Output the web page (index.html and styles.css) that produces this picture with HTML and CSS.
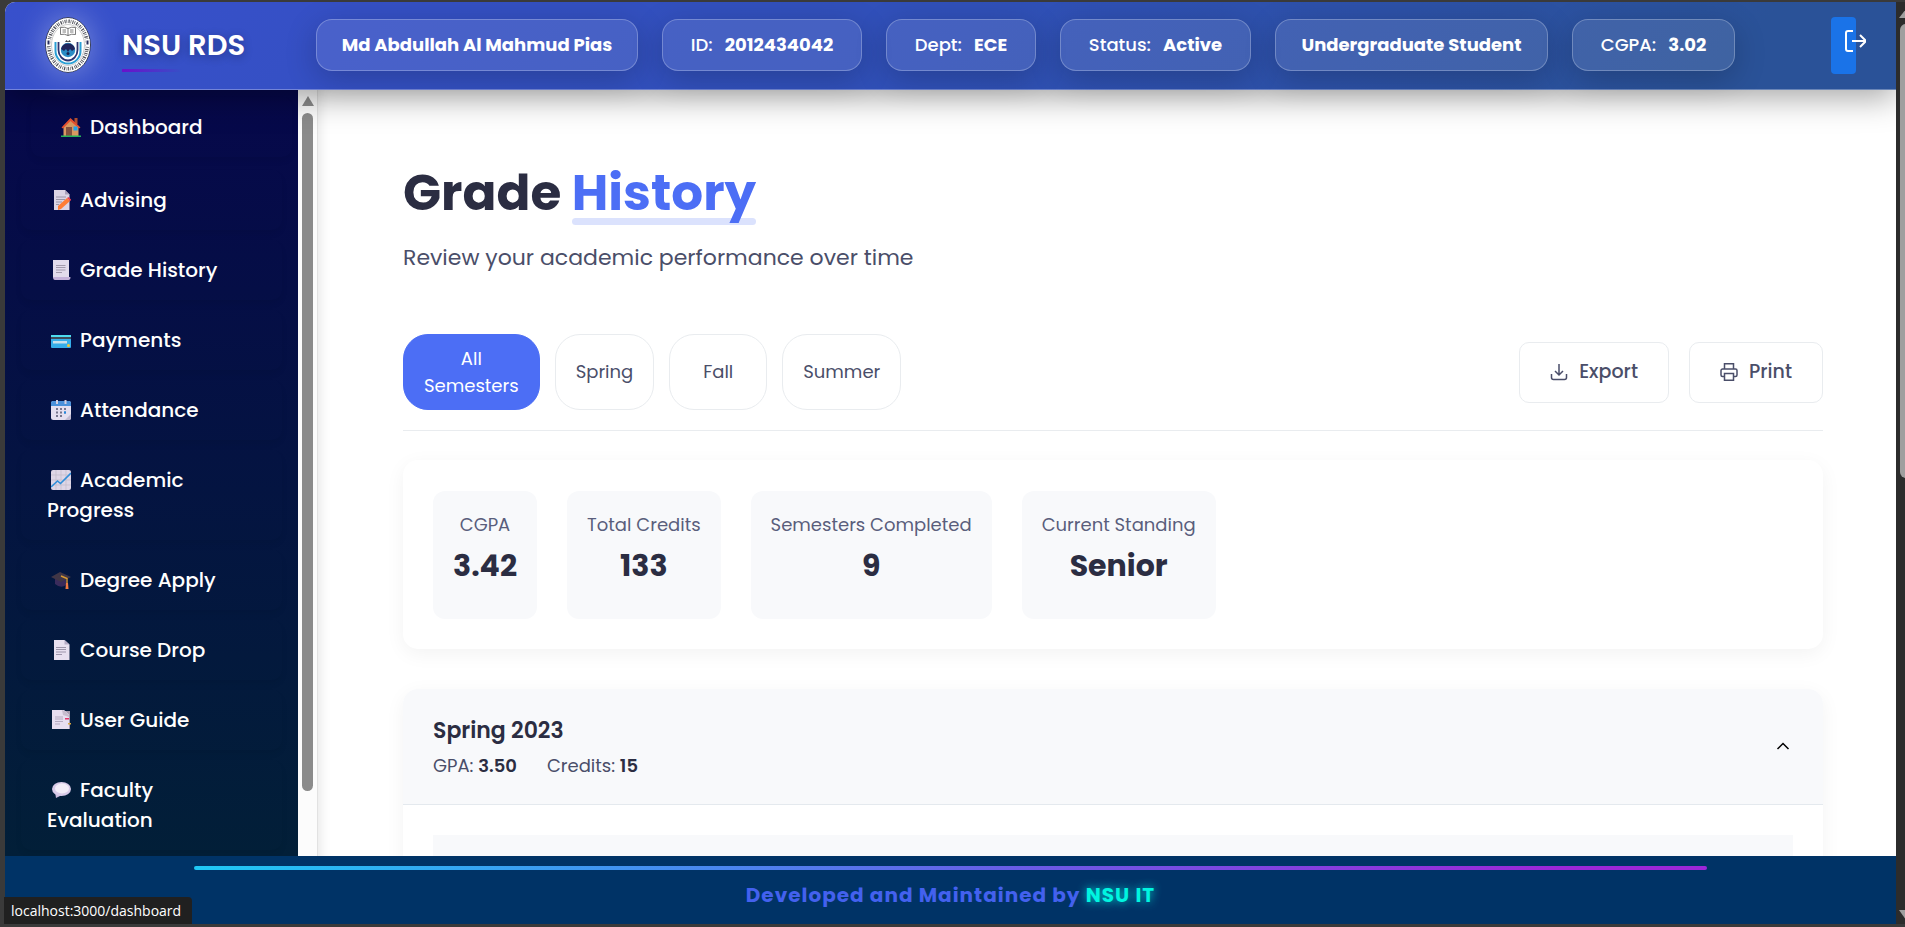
FILE: index.html
```html
<!DOCTYPE html>
<html lang="en">
<head>
<meta charset="utf-8">
<title>NSU RDS - Grade History</title>
<meta name="viewport" content="width=device-width, initial-scale=1">
<link rel="stylesheet" href="styles.css">
</head>
<body>
<div class="window">
  <div class="app">
    <header class="topbar">
      <div class="brand">
        <svg class="logo" viewBox="0 0 46 56" role="img" aria-label="North South University seal">
          <ellipse cx="23" cy="28" rx="22.500" ry="27.500" fill="#fff" stroke="#2d3140" stroke-width=".9"/>
          <ellipse cx="23" cy="28" rx="19.200" ry="23.700" fill="none" stroke="#23252f" stroke-width="3.600" stroke-dasharray="1 .9 .7 1.400 1.300 1 .6 1.200" opacity=".8"/>
          <ellipse cx="23" cy="28" rx="16.500" ry="20.500" fill="#fff" stroke="#999" stroke-width=".5"/>
          <path d="M15.500 10.500q4-1 7.500 1q3.500-2 7.500-1v7q-4-1-7.500 1q-3.500-2-7.500-1zM23 11.500v7M17.500 13h3.500M17.500 15h3.500M25 13h3.500M25 15h3.500" fill="#fff" stroke="#444" stroke-width=".7"/>
          <path d="M10.500 25v9a12.500 12.500 0 0 0 25 0v-9" fill="none" stroke="#2a9fd4" stroke-width="2"/>
          <path d="M13.500 25v8a9.500 10.500 0 0 0 19 0v-8" fill="none" stroke="#2c3470" stroke-width="1.800"/>
          <circle cx="23" cy="33" r="7.200" fill="#2a8cc4"/>
          <path d="M16 32a7.200 7.200 0 0 1 14 0l-3 2-2-2-2 3-2-3-2 2z" fill="#20265c"/>
          <path d="M20 25l1.500-2 1.500 1.500 1.500-1.500 1.500 2z" fill="#444"/>
          <circle cx="23" cy="36.500" r="1.500" fill="#1b2450"/>
          <path d="M1.500 22h4v7h-4zM40.500 22h4v7h-4z" fill="#fff"/>
          <path d="M2.500 23.500h2v4h-2zM41.500 23.500h2v4h-2z" fill="#252b5c"/>
        </svg>
        <span class="brand-name">NSU RDS</span>
      </div>
      <ul class="chips">
        <li class="chip chip-name"><strong>Md Abdullah Al Mahmud Pias</strong></li>
        <li class="chip chip-id"><span>ID:</span><strong>2012434042</strong></li>
        <li class="chip chip-dept"><span>Dept:</span><strong>ECE</strong></li>
        <li class="chip chip-status"><span>Status:</span><strong>Active</strong></li>
        <li class="chip chip-level"><strong>Undergraduate Student</strong></li>
        <li class="chip chip-cgpa"><span>CGPA:</span><strong>3.02</strong></li>
      </ul>
      <button class="logout" type="button" aria-label="Log out">
        <svg viewBox="0 0 24 24" width="24" height="24" aria-hidden="true"><path d="M11 2H6a2 2 0 0 0-2 2v16a2 2 0 0 0 2 2h5M10 12h13.500M18 6l6 6-6 6" fill="none" stroke="#fff" stroke-width="2"/></svg>
      </button>
    </header>

    <div class="workspace">
      <nav class="sidebar" aria-label="Main">
        <a class="nav-link is-hovered" href="#dashboard"><svg class="emoji" viewBox="0 0 20 20" aria-hidden="true"><path d="M13.500 1h3v6h-3z" fill="#b5502f"/><path d="M2.500 9L9.500 2l8 7v10h-15z" fill="#d99a62"/><path d="M.5 10.500L9.500 1l10 9.500-1.500 1L9.500 4 2 11.500z" fill="#e8502f"/><path d="M5 10h6v9H5z" fill="#85523f"/><path d="M12.500 9.500h4v4h-4z" fill="#20a6ee"/><path d="M0 18.500h20V20H0z" fill="#25b35a"/></svg>Dashboard</a>
        <a class="nav-link" href="#advising"><svg class="emoji" viewBox="0 0 20 20" aria-hidden="true"><path d="M3 0h11l4.500 4.500V20H3z" fill="#dcd5e6"/><path d="M14 0v4.500h4.500z" fill="#aaa2bd"/><path d="M5 7h10M5 9.500h9M5 12h6M5 14.500h3" stroke="#9b96a8"/><path d="M7 16l9-8 3 3-9 8-3 1z" fill="#ff7d36"/><path d="M16 8l1.500-1 3 3-1.500 1z" fill="#ef3f52"/></svg>Advising</a>
        <a class="nav-link" href="#grades"><svg class="emoji" viewBox="0 0 20 20" aria-hidden="true"><path d="M2 0h16v18H2z" fill="#e3dcec"/><path d="M2 17h17.500q0 3-2 3H4q-2 0-2-3z" fill="#c5b2da"/><path d="M5 5.500h9.500M5 7.500h9.500M5 10h9.500M5 12.500h6" stroke="#a39bac"/></svg>Grade History</a>
        <a class="nav-link" href="#payments"><svg class="emoji" viewBox="0 0 20 20" aria-hidden="true"><rect y="5" width="20" height="13" rx="1" fill="#35aeea"/><path d="M0 5h20v3H0z" fill="#4edcf0"/><path d="M0 7h20v2H0z" fill="#3d4b59"/><path d="M2 11h14v2.500H2z" fill="#c9e1eb"/><circle cx="17.500" cy="15.500" r="1.500" fill="#f2c733"/></svg>Payments</a>
        <a class="nav-link" href="#attendance"><svg class="emoji" viewBox="0 0 20 20" aria-hidden="true"><rect y="1" width="20" height="19" rx="2.500" fill="#e5dfef"/><path d="M0 6V3q0-2 2-2h16q2 0 2 2v3z" fill="#4a90da"/><path d="M5 0h2v4H5zM13.500 0h2v4h-2z" fill="#d5cfe0"/><path d="M5 9h12M5 12.500h12M5 16h8" stroke="#77758c" stroke-width="2" stroke-dasharray="2 2"/><path d="M13 11.500h2v2h-2z" fill="#1e8ae5"/><path d="M14 20l6-6v4q0 2-2 2z" fill="#c2bad0"/></svg>Attendance</a>
        <a class="nav-link" href="#progress"><svg class="emoji" viewBox="0 0 20 20" aria-hidden="true"><rect width="20" height="20" rx="2" fill="#ded6e6"/><path d="M5 0v20M10 0v20M15 0v20M0 5h20M0 10h20M0 15h20" stroke="#c2bbc9" stroke-width=".7"/><path d="M0 17l6.500-6 3 2.500L20 3" fill="none" stroke="#2f8ed9" stroke-width="1.600"/></svg>Academic Progress</a>
        <a class="nav-link" href="#degree"><svg class="emoji" viewBox="0 0 20 20" aria-hidden="true"><path d="M4 8v6q6 5 11 1V8z" fill="#3a2b5b"/><path d="M0 7l9-5 11 5-10 5z" fill="#403646"/><path d="M10 6l6 2.500V15" fill="none" stroke="#d99b32" stroke-width="1.400"/><path d="M15 13h2l.5 6h-3z" fill="#f07a42"/></svg>Degree Apply</a>
        <a class="nav-link" href="#drop"><svg class="emoji" viewBox="0 0 20 20" aria-hidden="true"><path d="M3 0h10.500l5 4.500V20H3z" fill="#e8e0f0"/><path d="M13.500 0v4.500h5z" fill="#b5abc6"/><path d="M5 7.500h10M5 9.500h10M5 12h10M5 14.500h6" stroke="#9c94aa"/></svg>Course Drop</a>
        <a class="nav-link" href="#guide"><svg class="emoji" viewBox="0 0 20 20" aria-hidden="true"><path d="M3 1h16v18H3z" fill="#a79baf"/><path d="M1 0h12l5 4.500V19H1z" fill="#e8def0"/><path d="M11 0l1 5 6 2V5l-4-4z" fill="#c7bccf"/><path d="M4 7h8M4 9h8M4 11.500h8M4 14h5" stroke="#b5aac0"/><path d="M14 8h4v1.500h-4z" fill="#e0346c"/><path d="M17 13h3v1.500h-3z" fill="#d8a640"/></svg>User Guide</a>
        <a class="nav-link" href="#evaluation"><svg class="emoji" viewBox="0 0 20 20" aria-hidden="true"><path d="M4 12l1 6 6-3z" fill="#c9b9dc"/><ellipse cx="10.500" cy="9" rx="9.500" ry="7" fill="#d8cae8"/><ellipse cx="11" cy="8.500" rx="7" ry="5" fill="#f3edf8"/></svg>Faculty Evaluation</a>
      </nav>
      <div class="side-scroll" aria-hidden="true"><i class="side-arrow"></i><i class="side-thumb"></i></div>

      <main class="content">
        <h1 class="title">Grade <span class="title-accent">History</span></h1>
        <p class="subtitle">Review your academic performance over time</p>

        <div class="toolbar">
          <div class="filters">
            <button class="filter is-active" type="button">All<br>Semesters</button>
            <button class="filter" type="button">Spring</button>
            <button class="filter" type="button">Fall</button>
            <button class="filter" type="button">Summer</button>
          </div>
          <div class="actions">
            <button class="action" type="button"><svg viewBox="0 0 18 18" width="18" height="18" aria-hidden="true"><path d="M9 1v11M5 8l4 4 4-4M1.500 11v3.500a2 2 0 0 0 2 2h11a2 2 0 0 0 2-2V11" fill="none" stroke="currentColor" stroke-width="1.500"/></svg>Export</button>
            <button class="action" type="button"><svg viewBox="0 0 18 18" width="18" height="18" aria-hidden="true"><path d="M4.500 6V.8h9V6M4.500 13.500h-2A1.500 1.500 0 0 1 1 12V7.500A1.500 1.500 0 0 1 2.500 6h13A1.500 1.500 0 0 1 17 7.500V12a1.500 1.500 0 0 1-1.500 1.500h-2M4.500 10.500h9v6.700h-9z" fill="none" stroke="currentColor" stroke-width="1.500"/></svg>Print</button>
          </div>
        </div>

        <section class="summary" aria-label="Summary">
          <div class="stat"><span class="stat-label">CGPA</span><strong class="stat-value">3.42</strong></div>
          <div class="stat"><span class="stat-label">Total Credits</span><strong class="stat-value">133</strong></div>
          <div class="stat"><span class="stat-label">Semesters Completed</span><strong class="stat-value">9</strong></div>
          <div class="stat"><span class="stat-label">Current Standing</span><strong class="stat-value">Senior</strong></div>
        </section>

        <section class="semester">
          <div class="semester-head">
            <div>
              <h2 class="semester-name">Spring 2023</h2>
              <p class="semester-meta"><span>GPA: <strong>3.50</strong></span><span>Credits: <strong>15</strong></span></p>
            </div>
            <button class="toggle" type="button" aria-label="Collapse semester"><svg viewBox="0 0 14 8" width="14" height="8" aria-hidden="true"><path d="M1.500 7L7 1.500 12.500 7" fill="none" stroke="#000" stroke-width="1.500"/></svg></button>
          </div>
          <div class="semester-body"><div class="table-head"></div></div>
        </section>
      </main>
    </div>

    <footer class="footer">
      <div class="footer-line"></div>
      <p class="footer-text">Developed and Maintained by <span class="footer-team">NSU IT</span></p>
    </footer>
  </div>
  <div class="page-scroll" aria-hidden="true"><i class="page-up"></i><i class="page-thumb"></i><i class="page-down"></i></div>
  <div class="status">localhost:3000/dashboard</div>
</div>
</body>
</html>
```
FILE: styles.css
```css
* { box-sizing: border-box; }

body {
  margin: 0;
  background: #3a3a3a;
  color: #2b2d42;
  font-family: Poppins, Inter, "Open Sans", sans-serif;
}

button { font: inherit; cursor: pointer; }
h1, h2, p, ul { margin: 0; padding: 0; }

.window {
  position: relative;
  display: flex;
  height: 100vh;
  padding: 2px 0 3px 5px;
  overflow: hidden;
}

.app {
  flex: 1;
  min-width: 0;
  display: flex;
  flex-direction: column;
  background: #fff;
  border-top-left-radius: 10px;
  overflow: hidden;
}

/* Top bar */
.topbar {
  position: relative;
  z-index: 2;
  display: flex;
  align-items: center;
  height: 88px;
  flex: none;
  padding: 0 40px 1px;
  background: linear-gradient(135deg, #3850cc, #3050b8 50%, #2a5298 90%);
  border-bottom: 1px solid rgba(255, 255, 255, .3);
  box-shadow: 0 8px 32px rgba(0, 0, 0, .35);
}

.brand { display: flex; align-items: center; gap: 31px; width: 271px; }

.logo {
  width: 46px;
  height: 56px;
  border-radius: 50%;
  box-shadow: 0 0 30px rgba(255, 255, 255, .35);
}

.brand-name {
  position: relative;
  color: #fff;
  font-size: 29px;
  font-weight: 600;
  line-height: 54px;
  text-shadow: 0 2px 10px rgba(0, 0, 0, .3);
}

.brand-name::after {
  content: "";
  position: absolute;
  left: 0;
  bottom: 0;
  width: 60px;
  height: 3px;
  background: linear-gradient(90deg, #6a11cb, transparent);
}

.chips { display: flex; gap: 24px; list-style: none; white-space: nowrap; }

.chip {
  display: flex;
  align-items: center;
  justify-content: center;
  gap: 12px;
  height: 52px;
  padding: 0 24px 1px;
  border: 1px solid rgba(255, 255, 255, .25);
  border-radius: 16px;
  background: rgba(255, 255, 255, .1);
  box-shadow: 0 8px 32px rgba(0, 0, 0, .2);
  color: #fff;
  font-size: 18px;
  font-weight: 500;
}

.chip strong { font-weight: 700; }
.chip-name { min-width: 322px; }
.chip-id { min-width: 200px; }
.chip-dept { min-width: 150px; }
.chip-status { min-width: 191px; }
.chip-level { min-width: 273px; }
.chip-cgpa { min-width: 163px; }

.logout {
  display: flex;
  align-items: center;
  width: 25px;
  height: 57px;
  margin-left: auto;
  padding: 0 0 8px 11px;
  border: 0;
  border-radius: 4px;
  background: #1a73e8;
}

.logout svg { flex: none; }

/* Sidebar */
.workspace { display: flex; flex: 1; min-height: 0; }

.sidebar {
  display: flex;
  flex-direction: column;
  gap: 10px;
  width: 293px;
  flex: none;
  padding: 10px 16px;
  background: linear-gradient(#06084b, #021f38);
  overflow: hidden;
}

.nav-link {
  flex: none;
  padding: 15px 60px 15px 26px;
  border-radius: 10px;
  box-shadow: 0 4px 6px rgba(0, 0, 0, .06);
  color: #fff;
  font-size: 20px;
  font-weight: 500;
  line-height: 30px;
  text-decoration: none;
}

.is-hovered { transform: translate(10px, -3px); }

.emoji {
  width: 20px;
  height: 20px;
  margin: 0 9px 0 4px;
  vertical-align: -3px;
}

.side-scroll {
  width: 20px;
  flex: none;
  display: flex;
  flex-direction: column;
  align-items: center;
  background: #fcfcfc;
  border-right: 1px solid #e2e2e2;
}

.side-arrow {
  margin: 6px 0 7px;
  border: 6px solid transparent;
  border-top: 0;
  border-bottom: 10px solid #8b8b8b;
}

.side-thumb { width: 11px; height: 678px; border-radius: 6px; background: #8b8b8b; }

/* Content */
.content {
  flex: 1;
  min-width: 0;
  padding: 70px 73px 0 85px;
  background: #fff;
  box-shadow: inset 12px 0 12px -10px rgba(0, 0, 0, .1);
  overflow: hidden;
}

.title { font-size: 50px; font-weight: 700; line-height: 66px; }

.title-accent { position: relative; z-index: 0; display: inline-block; color: #4c6ef5; }

.title-accent::after {
  content: "";
  position: absolute;
  z-index: -1;
  left: 0;
  bottom: 1px;
  width: 100%;
  height: 7px;
  border-radius: 4px;
  background: #dbe2fd;
}

.subtitle { margin-top: 14px; color: #4a4e69; font-size: 22px; line-height: 36px; }

.toolbar {
  display: flex;
  align-items: center;
  justify-content: space-between;
  margin-top: 58px;
  padding-bottom: 20px;
  border-bottom: 1px solid #e9ecef;
}

.filters { display: flex; gap: 15px; }

.filter {
  min-width: 98px;
  min-height: 76px;
  padding: 0 20px 1px;
  border: 1px solid #e9ecef;
  border-radius: 25px;
  background: #fff;
  color: #4a4e69;
  font-size: 18px;
  line-height: 27px;
}

.filter.is-active { border-color: #4c6ef5; background: #4c6ef5; color: #fff; }

.actions { display: flex; gap: 20px; }

.action {
  display: flex;
  align-items: center;
  gap: 11px;
  height: 61px;
  padding: 0 30px 1px;
  border: 1px solid #e9ecef;
  border-radius: 10px;
  background: #fff;
  color: #4a4e69;
  font-size: 19px;
  font-weight: 500;
}

.summary {
  display: flex;
  gap: 30px;
  margin-top: 29px;
  padding: 31px 30px 30px;
  border-radius: 15px;
  box-shadow: 0 5px 20px rgba(0, 0, 0, .05);
}

.stat {
  display: flex;
  flex-direction: column;
  align-items: center;
  min-height: 128px;
  padding: 20px;
  border-radius: 12px;
  background: #f8f9fb;
}

.stat-label { color: #5a5e7c; font-size: 18px; line-height: 28px; }
.stat-value { font-size: 30px; font-weight: 700; line-height: 54px; }

.semester {
  margin-top: 40px;
  border-radius: 15px;
  box-shadow: 0 5px 20px rgba(0, 0, 0, .05);
  overflow: hidden;
}

.semester-head {
  display: flex;
  align-items: center;
  justify-content: space-between;
  padding: 25px 33px 24px 30px;
  background: #f8f9fb;
  border-bottom: 1px solid #e4e9ee;
}

.semester-name { font-size: 22px; font-weight: 600; line-height: 34px; }

.semester-meta {
  display: flex;
  gap: 30px;
  margin-top: 4px;
  color: #4a4e69;
  font-size: 18px;
  line-height: 28px;
}

.semester-meta strong { color: #2b2d42; font-weight: 600; }

.toggle { display: flex; padding: 0 0 2px; border: 0; background: none; }

.semester-body { padding: 30px; }
.table-head { height: 60px; background: #f8f9fb; }

/* Footer */
.footer {
  position: relative;
  z-index: 1;
  flex: none;
  height: 68px;
  padding-top: 10px;
  background: #003366;
  text-align: center;
}

.footer-line {
  width: 80%;
  height: 4px;
  margin: 0 auto;
  border-radius: 2px;
  background: linear-gradient(90deg, #1fc8f5, #4a86f0 35%, #6a5be6 55%, #9c27d8 90%);
}

.footer-text {
  margin-top: 10px;
  color: #4361ee;
  font-size: 20px;
  font-weight: 700;
  line-height: 30px;
  letter-spacing: 1px;
}

.footer-team { color: #00f5e0; text-shadow: 0 0 10px #00d9d9; }

/* Window chrome */
.page-scroll {
  position: relative;
  flex: none;
  width: 9px;
  padding: 22px 0 0 4px;
  background: #2c2c2c;
  overflow: hidden;
}

.page-thumb { display: block; width: 12px; height: 454px; border-radius: 6px; background: #9f9f9f; }

.page-up, .page-down {
  position: absolute;
  left: 3px;
  border: 7px solid transparent;
}

.page-up { top: 7px; border-top: 0; border-bottom: 9px solid #9f9f9f; }
.page-down { bottom: 4px; border-bottom: 0; border-top: 10px solid #9f9f9f; }

.status {
  position: absolute;
  z-index: 3;
  left: 4px;
  bottom: 3px;
  padding: 0 11px 0 7px;
  border-top-right-radius: 4px;
  background: #202020;
  color: #fff;
  font-family: "Open Sans", "Noto Sans", sans-serif;
  font-size: 14px;
  line-height: 27px;
}
```
